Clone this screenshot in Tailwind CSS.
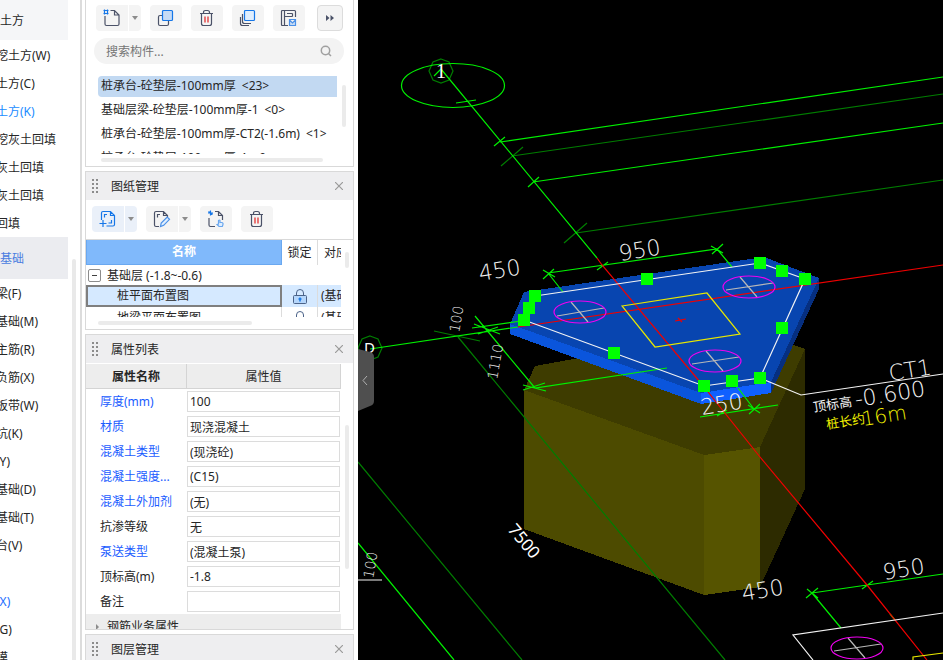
<!DOCTYPE html>
<html lang="zh-CN">
<head>
    <meta charset="UTF-8">
    <meta name="viewport" content="width=device-width, initial-scale=1.0">
    <title>基础建模</title>
    <script src="https://cdn.jsdelivr.net/npm/@tailwindcss/browser@4"></script>
</head>
<body class="flex h-screen overflow-hidden bg-white font-['Noto_Sans','Noto_Sans_CJK_SC',sans-serif] text-xs text-[#262626]">
    <!-- Component tree -->
    <nav class="flex w-[82px] shrink-0 justify-between overflow-hidden border-r-2 border-[#dcdcdc] whitespace-nowrap">
        <div class="w-[68px] overflow-hidden">
            <h2 class="flex h-10 items-center bg-[#f5f6f8] pt-0.5">土方</h2>
            <ul class="-ml-1 pt-px">
                <li class="flex h-7 items-center pt-px"><a href="#">挖土方(W)</a></li>
                <li class="flex h-7 items-center pt-px"><a href="#">土方(C)</a></li>
                <li class="flex h-7 items-center pt-px"><a href="#" class="text-[#1a8cff]">土方(K)</a></li>
                <li class="flex h-7 items-center pt-px"><a href="#">挖灰土回填</a></li>
                <li class="flex h-7 items-center pt-px"><a href="#">灰土回填</a></li>
                <li class="flex h-7 items-center pt-px"><a href="#">灰土回填</a></li>
                <li class="flex h-7 items-center pt-px"><a href="#">回填</a></li>
            </ul>
            <h2 class="flex h-[42px] items-center bg-[#ebecf0] pt-0.5 text-[#4a7de0]">基础</h2>
            <ul class="-ml-1">
                <li class="flex h-7 items-center pt-px"><a href="#">梁(F)</a></li>
                <li class="flex h-7 items-center pt-px"><a href="#">基础(M)</a></li>
                <li class="flex h-7 items-center pt-px"><a href="#">主筋(R)</a></li>
                <li class="flex h-7 items-center pt-px"><a href="#">负筋(X)</a></li>
                <li class="flex h-7 items-center pt-px"><a href="#">板带(W)</a></li>
                <li class="flex h-7 items-center pt-px"><a href="#">坑(K)</a></li>
                <li class="flex h-7 items-center pt-px"><a href="#">(Y)</a></li>
                <li class="flex h-7 items-center pt-px"><a href="#">基础(D)</a></li>
                <li class="flex h-7 items-center pt-px"><a href="#">基础(T)</a></li>
                <li class="flex h-7 items-center pt-px"><a href="#">台(V)</a></li>
                <li class="flex h-7 items-center pt-px"><a href="#" class="text-[#19c8e6]">)</a></li>
                <li class="flex h-7 items-center pt-px"><a href="#" class="text-[#1a6dff]">(X)</a></li>
                <li class="flex h-7 items-center pt-px"><a href="#">(G)</a></li>
                <li class="flex h-7 items-center pt-px"><a href="#">模</a></li>
            </ul>
        </div>
        <div class="mt-[259px] mr-1 w-1 rounded-t bg-[#e9e9e9]"></div>
    </nav>

    <!-- Docked panels -->
    <aside class="flex w-[276px] shrink-0 flex-col gap-1 pr-1 pl-[3px] whitespace-nowrap">
        <!-- Component list -->
        <section class="flex h-[167px] shrink-0 flex-col border-x border-b border-[#d9d9d9] pt-[5px] pr-[9px] pl-2">
            <div class="flex gap-[9px] pl-0.5">
                <div class="flex gap-px">
                    <button class="flex h-[26px] w-8 items-center justify-center rounded-l bg-[#f4f4f4]" aria-label="新建">
                        <svg class="h-5 w-5" viewBox="0 0 20 20" fill="none" stroke="#4b5268" stroke-width="1.2">
                            <path d="M3 8v8q0 1.500 1.500 1.500h11q1.500 0 1.500-1.500V7l-4.500-4.500H8.500M12.500 2.500V7H17" />
                            <path d="M1.500 2.500h5M1.500 5.500h5M2.500 1.500v5M5.500 1.500v5" stroke="#1677e8" />
                        </svg>
                    </button>
                    <button class="flex h-[26px] w-3 items-center justify-center rounded-r bg-[#f4f4f4]" aria-label="新建选项">
                        <svg class="h-1 w-1.5" viewBox="0 0 6 4"><path d="M0 0h6L3 4z" fill="#8c8c8c" /></svg>
                    </button>
                </div>
                <button class="flex h-[26px] w-8 items-center justify-center rounded bg-[#f4f4f4]" aria-label="复制">
                    <svg class="h-5 w-5" viewBox="0 0 20 20" fill="none" stroke-width="1.2">
                        <rect x="2.5" y="7.5" width="10" height="10" rx="1.5" stroke="#4b5268" />
                        <rect x="6.5" y="2.5" width="10" height="10" rx="1" fill="#c6dbf5" stroke="#1677e8" />
                    </svg>
                </button>
                <button class="flex h-[26px] w-8 items-center justify-center rounded bg-[#f4f4f4]" aria-label="删除">
                    <svg class="h-5 w-5" viewBox="0 0 20 20" fill="none" stroke="#4b5268" stroke-width="1.2">
                        <path d="M3 5.5h13M6.5 5.5v-1q0-2 2-2h2q2 0 2 2v1M4.500 5.500v10q0 2 2 2h6q2 0 2-2v-10" />
                        <path d="M8 8.500v6M11 8.500v6" stroke="#e02020" />
                    </svg>
                </button>
                <button class="flex h-[26px] w-8 items-center justify-center rounded bg-[#f4f4f4]" aria-label="层间复制">
                    <svg class="h-5 w-5" viewBox="0 0 20 20" fill="none" stroke-width="1.2">
                        <path d="M2.500 9v6.500q0 2 2 2h6.500M4.500 6v7.500q0 2 2 2h6.500" stroke="#4b5268" />
                        <rect x="6.500" y="2.500" width="10" height="10" rx="1" fill="#dfeefe" stroke="#1677e8" />
                    </svg>
                </button>
                <button class="flex h-[26px] w-8 items-center justify-center rounded bg-[#f4f4f4]" aria-label="存档">
                    <svg class="h-5 w-5" viewBox="0 0 20 20" fill="none" stroke="#4b5268" stroke-width="1.2">
                        <path d="M9 17.500H3.500q-1 0-1-1v-13q0-1 1-1h12q1 0 1 1V9M5.500 3v14M5.500 8.500h8M13.500 5.500v3M8 5.500h5.500" />
                        <path d="M10.500 11.500h6v6h-6zM10.500 12l3 3 3-3" fill="#c6dbf5" stroke="#4a90e8" />
                    </svg>
                </button>
                <button class="ml-[3px] flex h-[26px] w-[26px] items-center justify-center rounded border border-[#dcdcdc] bg-[#f4f4f4]" aria-label="更多">
                    <svg class="h-2 w-2" viewBox="0 0 8 8" fill="#4b5268"><path d="M0 1l3.500 3L0 7zM4.500 1L8 4 4.500 7z" /></svg>
                </button>
            </div>
            <label class="mt-[7px] flex h-[26px] items-center rounded-full bg-[#f3f3f3] px-3">
                <input type="text" placeholder="搜索构件..." aria-label="搜索构件" class="min-w-0 flex-1 bg-transparent pt-0.5 outline-none placeholder:text-[#757575]">
                <svg class="h-3 w-3" viewBox="0 0 12 12" fill="none" stroke="#a0a0a0" stroke-width="1.5"><circle cx="5.5" cy="5.5" r="4.2" /><path d="M8.500 8.500l2.500 2.500" /></svg>
            </label>
            <div class="mt-2.5 flex h-20 justify-between pl-1">
                <ul class="min-w-0 flex-1 overflow-hidden">
                    <li class="flex h-6 items-center"><span class="flex h-[21px] w-[239px] items-center gap-1.5 rounded-l-sm bg-[#c2d9f2] pl-[3px]">桩承台-砼垫层-100mm厚 <span>&lt;23&gt;</span></span></li>
                    <li class="flex h-6 items-center gap-1.5 pl-[3px]">基础层梁-砼垫层-100mm厚-1 <span>&lt;0&gt;</span></li>
                    <li class="flex h-6 items-center gap-1.5 pl-[3px]">桩承台-砼垫层-100mm厚-CT2(-1.6m) <span>&lt;1&gt;</span></li>
                    <li class="flex h-6 items-center gap-1.5 pl-[3px]">桩承台-砼垫层-100mm厚-4 <span>&lt;0&gt;</span></li>
                </ul>
                <div class="-mr-0.5 mt-[11px] h-[42px] w-1 rounded bg-[#ebebeb]"></div>
            </div>
            <div class="mt-1 ml-[7px] h-1 w-[222px] shrink-0 rounded bg-[#ebebeb]"></div>
        </section>

        <!-- Drawing management -->
        <section class="flex h-[159px] shrink-0 flex-col border border-[#d9d9d9]">
            <header class="flex h-7 shrink-0 items-center bg-[#eeeef0] pr-2.5 pl-1.5">
                <svg class="h-[14px] w-1.5" viewBox="0 0 6 14" fill="#8c8c8c" shape-rendering="crispEdges"><path d="M0 0h2v2H0zM4 0h2v2H4zM0 4h2v2H0zM4 4h2v2H4zM0 8h2v2H0zM4 8h2v2H4zM0 12h2v2H0zM4 12h2v2H4z" /></svg>
                <h3 class="ml-[13px] flex-1 pt-0.5">图纸管理</h3>
                <button aria-label="关闭"><svg class="h-2 w-2" viewBox="0 0 8 8" stroke="#9a9a9a" stroke-width="1.2"><path d="M0 0l8 8M8 0L0 8" /></svg></button>
            </header>
            <div class="flex gap-[9px] px-1.5 pt-1.5 pb-[7px]">
                <div class="flex gap-px">
                    <button class="flex h-[26px] w-8 items-center justify-center rounded-l bg-[#eaf0f9]" aria-label="添加图纸">
                        <svg class="h-5 w-5" viewBox="0 0 20 20" fill="none" stroke="#1677e8" stroke-width="1.2">
                            <path d="M3.500 11V4q0-1.500 1.500-1.500h7.500l4 4v9q0 1.500-1.500 1.500H8.500M12.500 2.500v4h4M6.500 8.500v-3h2.500M13.500 11v3h-3M1.500 14.500h7M5 11v7" />
                        </svg>
                    </button>
                    <button class="flex h-[26px] w-3 items-center justify-center rounded-r bg-[#eaf0f9]" aria-label="添加选项">
                        <svg class="h-1 w-1.5" viewBox="0 0 6 4"><path d="M0 0h6L3 4z" fill="#8c8c8c" /></svg>
                    </button>
                </div>
                <div class="flex gap-px">
                    <button class="flex h-[26px] w-8 items-center justify-center rounded-l bg-[#f4f4f4]" aria-label="分割图纸">
                        <svg class="h-5 w-5" viewBox="0 0 20 20" fill="none" stroke="#4b5268" stroke-width="1.2">
                            <path d="M7 17.500H4q-1.500 0-1.500-1.500V4q0-1.500 1.500-1.500h7.500l4 4V8M11.500 2.500v4h4M5.500 8.500v-3h2.500" />
                            <path d="M8.500 17.500l.7-3.500 6-6 2.300 2.300-5.800 6z" fill="#dfeefe" stroke="#4a90e8" />
                        </svg>
                    </button>
                    <button class="flex h-[26px] w-3 items-center justify-center rounded-r bg-[#f4f4f4]" aria-label="分割选项">
                        <svg class="h-1 w-1.5" viewBox="0 0 6 4"><path d="M0 0h6L3 4z" fill="#8c8c8c" /></svg>
                    </button>
                </div>
                <button class="flex h-[26px] w-8 items-center justify-center rounded bg-[#f4f4f4]" aria-label="定位">
                    <svg class="h-5 w-5" viewBox="0 0 20 20" fill="none" stroke="#4b5268" stroke-width="1.2">
                        <path d="M3 9v7q0 1.500 1.500 1.500H9M9 2.500h3.500l4 4V11M12.500 2.500v4h4" />
                        <path d="M4.500 1.500v5M2 4h5M2.500 2.500l4 3" stroke="#1677e8" />
                        <path d="M12.500 15v-3.500q1-1 1.500 0v2h2q1.500.5 1 2l-.7 2H13l-2-2z" fill="#dfeefe" stroke="#6aa7ee" />
                    </svg>
                </button>
                <button class="flex h-[26px] w-8 items-center justify-center rounded bg-[#f4f4f4]" aria-label="删除图纸">
                    <svg class="h-5 w-5" viewBox="0 0 20 20" fill="none" stroke="#4b5268" stroke-width="1.2">
                        <path d="M3 5.500h13M6.500 5.500v-1q0-2 2-2h2q2 0 2 2v1M4.500 5.500v10q0 2 2 2h6q2 0 2-2v-10" />
                        <path d="M8 8.500v6M11 8.500v6" stroke="#e02020" />
                    </svg>
                </button>
            </div>
            <div class="flex justify-between border-t border-[#d9d9d9]">
                <div class="h-[77px] w-[255px] overflow-hidden">
                    <table class="w-[280px] table-fixed border-separate border-spacing-0">
                        <thead>
                            <tr class="h-[25px]">
                                <th class="w-[196px] border border-t-0 border-[#6aa8f0] bg-[#80b9fb] font-bold text-white">名称</th>
                                <th class="w-9 border-r border-[#dcdcdc] font-normal">锁定</th>
                                <th class="pl-1.5 text-left font-normal">对应楼层</th>
                            </tr>
                        </thead>
                        <tbody>
                            <tr class="h-5">
                                <td colspan="3">
                                    <div class="flex items-center gap-1.5 pl-0.5">
                                        <button class="flex h-[13px] w-[13px] items-center justify-center rounded-xs border border-[#8c8c8c]" aria-label="折叠"><span class="h-px w-[5px] bg-[#404040]"></span></button>
                                        <span class="pt-px">基础层 (-1.8~-0.6)</span>
                                    </div>
                                </td>
                            </tr>
                            <tr class="h-[22px] bg-[#d5e9ff]">
                                <td class="border-2 border-[#7f7f7f] pl-[29px]">桩平面布置图</td>
                                <td class="border-r border-[#dcdcdc]">
                                    <svg class="mx-auto h-[15px] w-[14px]" viewBox="0 0 14 15" fill="none" stroke="#4b6288"><path d="M3.500 6.500V4q0-3.500 3.500-3.500T10.500 4v2.500" /><rect x=".5" y="6.5" width="13" height="8" rx="1" fill="#b5d6fb" /><path d="M7 8.500v4M5.500 10h3" stroke="#1677e8" stroke-width="1.5" /></svg>
                                </td>
                                <td class="pl-[3px]">(基础层)</td>
                            </tr>
                            <tr class="h-[22px]">
                                <td class="border-r border-[#dcdcdc] pl-[31px]">地梁平面布置图</td>
                                <td class="border-r border-[#dcdcdc]">
                                    <svg class="mx-auto h-[15px] w-[14px]" viewBox="0 0 14 15" fill="none" stroke="#4b6288"><path d="M3.500 6.500V4q0-3.500 3.500-3.500T10.500 4v2.500" /><rect x=".5" y="6.5" width="13" height="8" rx="1" fill="#dfeefe" /></svg>
                                </td>
                                <td class="pl-[3px]">(基础层)</td>
                            </tr>
                        </tbody>
                    </table>
                </div>
                <div class="mt-3 mr-1 h-4 w-1 rounded bg-[#ebebeb]"></div>
            </div>
            <div class="mt-1 ml-3 h-1 w-[154px] shrink-0 rounded bg-[#ebebeb]"></div>
        </section>

        <!-- Property list -->
        <section class="flex h-[296px] shrink-0 flex-col border border-[#d9d9d9]">
            <header class="flex h-7 shrink-0 items-center bg-[#eeeef0] pr-2.5 pl-1.5">
                <svg class="h-[14px] w-1.5" viewBox="0 0 6 14" fill="#8c8c8c" shape-rendering="crispEdges"><path d="M0 0h2v2H0zM4 0h2v2H4zM0 4h2v2H0zM4 4h2v2H4zM0 8h2v2H0zM4 8h2v2H4zM0 12h2v2H0zM4 12h2v2H4z" /></svg>
                <h3 class="ml-[13px] flex-1 pt-0.5">属性列表</h3>
                <button aria-label="关闭"><svg class="h-2 w-2" viewBox="0 0 8 8" stroke="#9a9a9a" stroke-width="1.2"><path d="M0 0l8 8M8 0L0 8" /></svg></button>
            </header>
            <div class="mt-px flex min-h-0 flex-1 justify-between overflow-hidden">
                <div class="w-[255px]">
                    <table class="w-full table-fixed border-separate border-spacing-0">
                        <thead>
                            <tr class="h-[25px] bg-[#ededed]">
                                <th class="w-[101px] border-r border-b border-[#d4d4d4] pt-0.5 font-bold">属性名称</th>
                                <th class="border-r border-b border-[#d4d4d4] pt-0.5 font-normal">属性值</th>
                            </tr>
                        </thead>
                        <tbody>
                            <tr class="h-[25px]"><td class="pl-[14px] text-[#1a5cff]"><label for="p-thickness">厚度(mm)</label></td><td><input id="p-thickness" type="text" value="100" class="block h-[21px] w-[153px] border border-[#dcdcdc] px-0.5 outline-none"></td></tr>
                            <tr class="h-[25px]"><td class="pl-[14px] text-[#1a5cff]"><label for="p-material">材质</label></td><td><input id="p-material" type="text" value="现浇混凝土" class="block h-[21px] w-[153px] border border-[#dcdcdc] px-0.5 outline-none"></td></tr>
                            <tr class="h-[25px]"><td class="pl-[14px] text-[#1a5cff]"><label for="p-type">混凝土类型</label></td><td><input id="p-type" type="text" value="(现浇砼)" class="block h-[21px] w-[153px] border border-[#dcdcdc] px-0.5 outline-none"></td></tr>
                            <tr class="h-[25px]"><td class="pl-[14px] text-[#1a5cff]"><label for="p-strength">混凝土强度...</label></td><td><input id="p-strength" type="text" value="(C15)" class="block h-[21px] w-[153px] border border-[#dcdcdc] px-0.5 outline-none"></td></tr>
                            <tr class="h-[25px]"><td class="pl-[14px] text-[#1a5cff]"><label for="p-additive">混凝土外加剂</label></td><td><input id="p-additive" type="text" value="(无)" class="block h-[21px] w-[153px] border border-[#dcdcdc] px-0.5 outline-none"></td></tr>
                            <tr class="h-[25px]"><td class="pl-[14px]"><label for="p-seepage">抗渗等级</label></td><td><input id="p-seepage" type="text" value="无" class="block h-[21px] w-[153px] border border-[#dcdcdc] px-0.5 outline-none"></td></tr>
                            <tr class="h-[25px]"><td class="pl-[14px] text-[#1a5cff]"><label for="p-pump">泵送类型</label></td><td><input id="p-pump" type="text" value="(混凝土泵)" class="block h-[21px] w-[153px] border border-[#dcdcdc] px-0.5 outline-none"></td></tr>
                            <tr class="h-[25px]"><td class="pl-[14px]"><label for="p-top">顶标高(m)</label></td><td><input id="p-top" type="text" value="-1.8" class="block h-[21px] w-[153px] border border-[#dcdcdc] px-0.5 outline-none"></td></tr>
                            <tr class="h-[25px]"><td class="pl-[14px]"><label for="p-note">备注</label></td><td><input id="p-note" type="text" value="" class="block h-[21px] w-[153px] border border-[#dcdcdc] px-0.5 outline-none"></td></tr>
                            <tr class="h-[25px] bg-[#ededed]">
                                <td colspan="2" class="pl-2.5">
                                    <div class="flex items-center gap-2"><svg class="h-1.5 w-[3px]" viewBox="0 0 3 6"><path d="M0 0l3 3-3 3z" fill="#8c8c8c" /></svg>钢筋业务属性</div>
                                </td>
                            </tr>
                        </tbody>
                    </table>
                </div>
                <div class="mt-[61px] mr-1 h-36 w-1 rounded bg-[#ebebeb]"></div>
            </div>
        </section>

        <!-- Layer management -->
        <section class="shrink-0 border border-[#d9d9d9]">
            <header class="flex h-7 items-center bg-[#eeeef0] pr-2.5 pl-1.5">
                <svg class="h-[14px] w-1.5" viewBox="0 0 6 14" fill="#8c8c8c" shape-rendering="crispEdges"><path d="M0 0h2v2H0zM4 0h2v2H4zM0 4h2v2H0zM4 4h2v2H4zM0 8h2v2H0zM4 8h2v2H4zM0 12h2v2H0zM4 12h2v2H4z" /></svg>
                <h3 class="ml-[13px] flex-1 pt-0.5">图层管理</h3>
                <button aria-label="关闭"><svg class="h-2 w-2" viewBox="0 0 8 8" stroke="#9a9a9a" stroke-width="1.2"><path d="M0 0l8 8M8 0L0 8" /></svg></button>
            </header>
        </section>
    </aside>

    <!-- Model view -->
    <main class="relative min-w-0 flex-1 bg-black">
        <svg class="h-full w-full" viewBox="358 0 585 660" preserveAspectRatio="xMidYMid slice" fill="none" stroke-width="1.2">
            <!-- pile cap -->
            <g shape-rendering="crispEdges">
                <path d="M524 390l11-24 165-30 93 9 12 4-45 98-56 8z" fill="#3e3c00" />
                <path d="M524 390l180 65v140l-180-66z" fill="#4d4b00" />
                <path d="M704 455l56-8v140l-56 8z" fill="#565400" />
                <path d="M805 349v140l-45 98V447z" fill="#2d2b00" />
            </g>
            <!-- dark axis lines -->
            <g stroke="#007d00">
                <path d="M512 156L943 94M501 166l22-19M576 233l367-53M564 243l23-20M434 331l46 10M458 337l267 323M358 462l164 198" />
                <path d="M441 59l8 3 4 9-4 9-8 3-8-3-4-9 4-9zM370 336l8 3 4 9-4 9-8 3-8-3-4-9 4-9z" />
            </g>
            <!-- cushion -->
            <g shape-rendering="crispEdges">
                <path d="M524 292l240-35 55 21-48 104-70 11-191-69z" fill="#0845b0" />
                <path d="M510 324l191 69v11l-191-70z" fill="#0a55dc" />
                <path d="M701 393l70-11v11l-70 11z" fill="#0f60ff" />
                <path d="M819 278v11l-48 104v-11z" fill="#062f80" />
            </g>
            <!-- bright axis and dimension lines -->
            <g stroke="#00f000">
                <ellipse cx="453" cy="85.5" rx="51.5" ry="22" />
                <path d="M441 69l156 189M434 76l7-7M456 103l20-3M500 142L943 77M494 146l11-9M533 182l410-59M528 187l11-10" />
                <path d="M548 273l169-24 15 18M548 273l15 19M543 279l11-10M543 270l12 7M597 270l11-8M712 254l11-10M711 246l12 7" />
                <path d="M370 349l148-22M475 316l60 72 132-20M472 328l56-8M474 324l26 10M478 334l20-7M523 385l23 6M523 390l22-7" />
                <path d="M700 417l78-12M738 388l16 21M749 414l11-10M748 405l12 8M717 416l10-6" />
                <path d="M358 543l96 117M812 593l131-19M812 593l29 35M806 598l12-10M807 589l11 9M862 589l11-8M890 614l5 6" />
            </g>
            <!-- red grid -->
            <path d="M597 258l5 7 98 117 60 75 107 128 60 75M518 327l425-62M675 321l11-2M678 318l4 4" stroke="#f00000" />
            <!-- piles -->
            <path d="M557 316l47-8M571 302l17 20M726 290l47-7M740 277l17 20M692 364l47-7M706 351l17 20M834 651l47-7M848 638l17 20" stroke="#b8b8b8" />
            <g stroke="#f000f0">
                <ellipse cx="580" cy="312" rx="26" ry="11" />
                <ellipse cx="749" cy="287" rx="26" ry="11" />
                <ellipse cx="715" cy="361" rx="26" ry="11" />
                <ellipse cx="857" cy="648" rx="26" ry="11" />
            </g>
            <path d="M622 306l85-13 33 41-85 13zM943 653l-30 4v3" stroke="#e8e800" />
            <!-- white outlines -->
            <g stroke="#f4f4f4">
                <path d="M535 296l225-33 45 16-45 99-56 8-180-66z" />
                <path d="M760 378l41 17 142-21M813 660l-20-25 150-22M358 580h24" />
            </g>
            <!-- grips -->
            <path d="M529 290h12v12h-12zM523 302h12v12h-12zM518 314h12v12h-12zM608 347h12v12h-12zM698 380h12v12h-12zM726 375h12v12h-12zM754 372h12v12h-12zM776 322h12v12h-12zM799 273h12v12h-12zM776 265h12v12h-12zM754 257h12v12h-12zM641 273h12v12h-12z" fill="#00ff00" shape-rendering="crispEdges" />
            <!-- labels -->
            <g fill="#f4f4f4" class="font-['DejaVu_Sans',sans-serif] font-extralight" font-size="22">
                <text transform="translate(480 281) rotate(-9)">450</text>
                <text transform="translate(620 261) rotate(-9)">950</text>
                <text transform="translate(702 415) rotate(-9)">250</text>
                <text transform="translate(743 601) rotate(-9)">450</text>
                <text transform="translate(884 580) rotate(-9)">950</text>
                <text transform="translate(890 381) rotate(-9)">CT1</text>
                <text transform="translate(856 407) rotate(-9)">-0.600</text>
                <text transform="translate(863 426) rotate(-9)" fill="#f0f000" font-size="20">16m</text>
                <text transform="translate(459 333) rotate(-80)" font-size="14">100</text>
                <text transform="translate(497 380) rotate(-80)" font-size="14">1110</text>
                <text transform="translate(373 579) rotate(-80)" font-size="14">100</text>
            </g>
            <g class="font-['Noto_Sans','Noto_Sans_CJK_SC',sans-serif]">
                <text transform="translate(814 412) rotate(-9)" fill="#f4f4f4" font-size="13">顶标高</text>
                <text transform="translate(827 429) rotate(-9)" fill="#f0f000" font-size="13">桩长约</text>
                <text transform="translate(507 530) rotate(50)" fill="#ffffff" font-size="17">7500</text>
                <text x="364" y="353" fill="#ffffff" font-size="15">D</text>
            </g>
            <text x="436" y="78" fill="#ffffff" font-size="20" class="font-['Liberation_Serif',serif]">1</text>
        </svg>
        <button class="absolute top-[349px] left-0 h-[62px] w-4" aria-label="收起面板">
            <svg class="h-full w-full" viewBox="0 0 16 62" fill="none"><path d="M0 0l12 3q4 1 4 5v44q0 4-4 5L0 62z" fill="#4f4f4f" /><path d="M9 27l-4 4.500L9 36" stroke="#b0b0b0" /></svg>
        </button>
    </main>
</body>
</html>
